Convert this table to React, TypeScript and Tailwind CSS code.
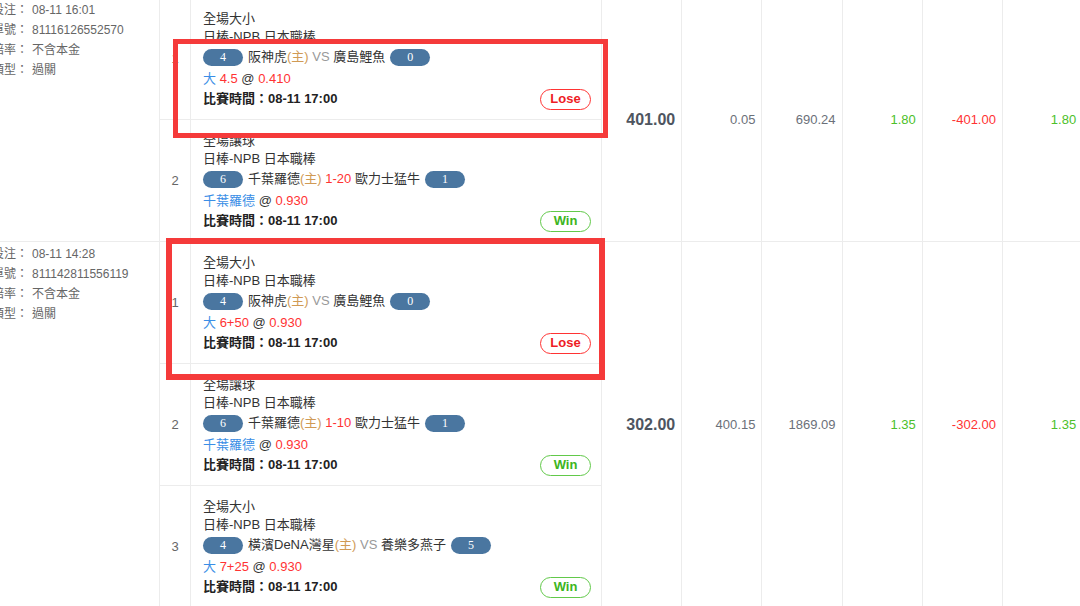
import React from "react";

type Leg = {
  market: string;
  home: string;
  away: string;
  homeScore: string;
  awayScore: string;
  line?: string;
  pick: string;
  value?: string;
  odds: string;
  result: "Win" | "Lose";
};

type Bet = {
  time: string;
  id: string;
  legs: Leg[];
  stake: string;
  cols: { v: string; tone: "gray" | "green" | "red" }[];
};

const bets: Bet[] = [
  {
    time: "08-11 16:01",
    id: "81116126552570",
    stake: "401.00",
    cols: [
      { v: "0.05", tone: "gray" },
      { v: "690.24", tone: "gray" },
      { v: "1.80", tone: "green" },
      { v: "-401.00", tone: "red" },
      { v: "1.80", tone: "green" },
    ],
    legs: [
      {
        market: "全場大小",
        home: "阪神虎",
        away: "廣島鯉魚",
        homeScore: "4",
        awayScore: "0",
        pick: "大",
        value: "4.5",
        odds: "0.410",
        result: "Lose",
      },
      {
        market: "全場讓球",
        home: "千葉羅德",
        away: "歐力士猛牛",
        homeScore: "6",
        awayScore: "1",
        line: "1-20",
        pick: "千葉羅德",
        odds: "0.930",
        result: "Win",
      },
    ],
  },
  {
    time: "08-11 14:28",
    id: "811142811556119",
    stake: "302.00",
    cols: [
      { v: "400.15", tone: "gray" },
      { v: "1869.09", tone: "gray" },
      { v: "1.35", tone: "green" },
      { v: "-302.00", tone: "red" },
      { v: "1.35", tone: "green" },
    ],
    legs: [
      {
        market: "全場大小",
        home: "阪神虎",
        away: "廣島鯉魚",
        homeScore: "4",
        awayScore: "0",
        pick: "大",
        value: "6+50",
        odds: "0.930",
        result: "Lose",
      },
      {
        market: "全場讓球",
        home: "千葉羅德",
        away: "歐力士猛牛",
        homeScore: "6",
        awayScore: "1",
        line: "1-10",
        pick: "千葉羅德",
        odds: "0.930",
        result: "Win",
      },
      {
        market: "全場大小",
        home: "橫濱DeNA灣星",
        away: "養樂多燕子",
        homeScore: "4",
        awayScore: "5",
        pick: "大",
        value: "7+25",
        odds: "0.930",
        result: "Win",
      },
    ],
  },
];

const Pill = ({ n }: { n: string }) => (
  <span className="inline-flex h-[17px] w-[40px] items-center justify-center rounded-full bg-[#4a76a0] font-['Liberation_Serif',serif] text-[12px] text-white">
    {n}
  </span>
);

const LegRow = ({ leg, idx }: { leg: Leg; idx: number }) => (
  <div className="flex h-[122px] border-b border-[#ececec]">
    <div className="flex w-[31px] items-center justify-center border-r border-[#ececec] text-[13px] text-[#666]">
      {idx + 1}
    </div>
    <div className="w-[411px] border-r border-[#ececec] pl-[12px] pr-[10px] pt-[12px] text-[13px] text-[#333]">
      <div className="flex h-[18px] items-center">{leg.market}</div>
      <div className="flex h-[18px] items-center">日棒-NPB 日本職棒</div>
      <div className="flex h-[22px] items-center gap-[5px]">
        <Pill n={leg.homeScore} />
        <span>
          {leg.home}
          <span className="text-[#d09a55]">(主)</span>{" "}
          {leg.line ? (
            <span className="text-[#f33]">{leg.line}</span>
          ) : (
            <span className="text-[#999]">VS</span>
          )}{" "}
          {leg.away}
        </span>
        <Pill n={leg.awayScore} />
      </div>
      <div className="flex h-[21px] items-center whitespace-pre">
        <span className="text-[#3a8ee6]">{leg.pick}</span>
        {leg.value && <span className="text-[#f33]"> {leg.value}</span>}
        <span> @ </span>
        <span className="text-[#f33]">{leg.odds}</span>
      </div>
      <div className="flex h-[20px] items-center justify-between">
        <span className="font-bold text-[#222]">比賽時間：08-11 17:00</span>
        {leg.result === "Lose" ? (
          <span className="flex h-[21px] w-[51px] items-center justify-center rounded-full border border-[#f33] text-[13px] font-bold text-[#ee1c25]">
            Lose
          </span>
        ) : (
          <span className="flex h-[21px] w-[51px] items-center justify-center rounded-full border border-[#62c94a] text-[13px] font-bold text-[#3cb521]">
            Win
          </span>
        )}
      </div>
    </div>
  </div>
);

const toneCls = {
  gray: "text-[#6b7079]",
  green: "text-[#4cbf2a]",
  red: "text-[#f33]",
};

export default function App() {
  return (
    <div className="relative h-[606px] w-[1080px] overflow-hidden bg-white font-['Liberation_Sans','Noto_Sans_CJK_TC',sans-serif]">
      <div className="-mt-[2px] w-max">
        {bets.map((bet, b) => (
          <div key={b} className="flex">
            <div className="w-[160px] border-b border-r border-[#ececec] pt-[2px] text-[12px] text-[#666]">
              {[
                ["投注：", bet.time],
                ["單號：", bet.id],
                ["賠率：", "不含本金"],
                ["類型：", "過關"],
              ].map(([k, v]) => (
                <div key={k} className="flex h-[20px] items-center">
                  <div className="flex w-[28px] shrink-0 justify-end whitespace-nowrap">{k}</div>
                  <span className="ml-[4px]">{v}</span>
                </div>
              ))}
            </div>
            <div className="flex flex-col">
              {bet.legs.map((leg, i) => (
                <LegRow key={i} leg={leg} idx={i} />
              ))}
            </div>
            <div className="flex w-[80.2px] items-center justify-end border-b border-r border-[#ececec] pr-[6px] text-[16px] font-bold text-[#4e5560]">
              {bet.stake}
            </div>
            {bet.cols.map((c, i) => (
              <div
                key={i}
                className={`flex w-[80.2px] items-center justify-end border-b border-r border-[#ececec] pr-[6px] text-[13px] ${toneCls[c.tone]}`}
              >
                {c.v}
              </div>
            ))}
          </div>
        ))}
      </div>

      {/* red annotation boxes */}
      <div className="absolute left-[173px] top-[39px] h-[99px] w-[435px] border-[5px] border-[#f53a3a]" />
      <div className="absolute left-[166px] top-[238px] h-[142px] w-[439px] border-[6px] border-[#f53a3a]" />
    </div>
  );
}
